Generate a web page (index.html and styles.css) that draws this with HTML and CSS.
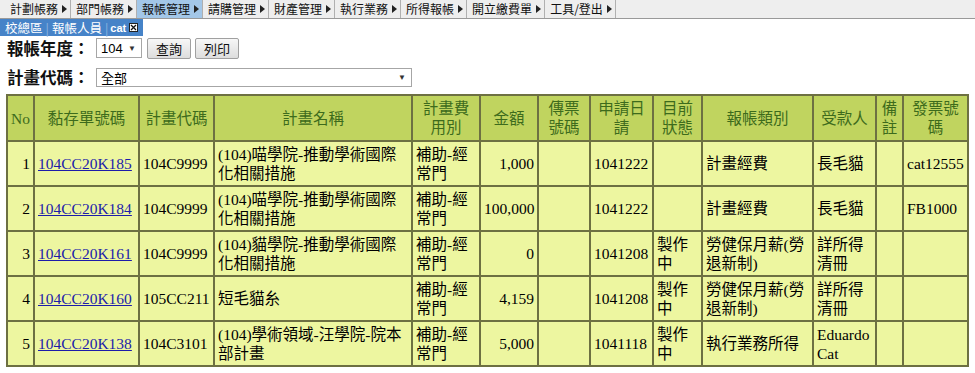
FILE: index.html
```html
<!DOCTYPE html>
<html lang="zh-Hant">
<head>
    <meta charset="UTF-8">
    <meta name="viewport" content="width=device-width, initial-scale=1.0">
    <title>報帳管理</title>
    <link rel="stylesheet" href="styles.css">
</head>
<body>
    <!-- 主選單 -->
    <div class="menubar">
        <ul>
            <li>計劃帳務</li>
            <li>部門帳務</li>
            <li class="active">報帳管理</li>
            <li>請購管理</li>
            <li>財產管理</li>
            <li>執行業務</li>
            <li>所得報帳</li>
            <li>開立繳費單</li>
            <li>工具/登出</li>
        </ul>
    </div>

    <!-- 使用者資訊 -->
    <div class="userbar">
        校總區<span class="sep">|</span>報帳人員<span class="sep">|</span><b>cat</b>
        <span class="close"><svg width="9" height="9" viewBox="0 0 9 9"><rect x="0.5" y="0.5" width="8" height="8" fill="#fff" stroke="#222"/><path d="M2 2L7 7M7 2L2 7" stroke="#111" stroke-width="1.3"/></svg></span>
    </div>

    <!-- 查詢條件 -->
    <form class="query">
        <div class="query_row">
            <label>報帳年度：</label>
            <div class="select select_year"><span>104</span><span class="arrow">▼</span></div>
            <button type="button">查詢</button>
            <button type="button">列印</button>
        </div>
        <div class="query_row">
            <label>計畫代碼：</label>
            <div class="select select_plan"><span>全部</span><span class="arrow">▼</span></div>
        </div>
    </form>

    <!-- 報帳清單 -->
    <table class="report">
        <colgroup>
            <col class="w_no"><col class="w_doc"><col class="w_code"><col class="w_name">
            <col class="w_type"><col class="w_amt"><col class="w_vou"><col class="w_date">
            <col class="w_stat"><col class="w_cat"><col class="w_payee"><col class="w_memo"><col class="w_inv">
        </colgroup>
        <tr>
            <th class="nowrap">No</th><th>黏存單號碼</th><th>計畫代碼</th><th>計畫名稱</th><th>計畫費用別</th><th>金額</th>
            <th>傳票號碼</th><th>申請日請</th><th>目前狀態</th><th>報帳類別</th><th>受款人</th><th>備註</th><th>發票號碼</th>
        </tr>
        <tr>
            <td class="num">1</td><td><a href="#">104CC20K185</a></td><td>104C9999</td>
            <td>(104)喵學院-推動學術國際化相關措施</td><td>補助-經常門</td><td class="num">1,000</td>
            <td></td><td>1041222</td><td></td><td>計畫經費</td><td>長毛貓</td><td></td><td>cat12555</td>
        </tr>
        <tr>
            <td class="num">2</td><td><a href="#">104CC20K184</a></td><td>104C9999</td>
            <td>(104)喵學院-推動學術國際化相關措施</td><td>補助-經常門</td><td class="num">100,000</td>
            <td></td><td>1041222</td><td></td><td>計畫經費</td><td>長毛貓</td><td></td><td>FB1000</td>
        </tr>
        <tr>
            <td class="num">3</td><td><a href="#">104CC20K161</a></td><td>104C9999</td>
            <td>(104)貓學院-推動學術國際化相關措施</td><td>補助-經常門</td><td class="num">0</td>
            <td></td><td>1041208</td><td>製作中</td><td>勞健保月薪(勞退新制)</td><td>詳所得清冊</td><td></td><td></td>
        </tr>
        <tr>
            <td class="num">4</td><td><a href="#">104CC20K160</a></td><td>105CC211</td>
            <td>短毛貓糸</td><td>補助-經常門</td><td class="num">4,159</td>
            <td></td><td>1041208</td><td>製作中</td><td>勞健保月薪(勞退新制)</td><td>詳所得清冊</td><td></td><td></td>
        </tr>
        <tr>
            <td class="num">5</td><td><a href="#">104CC20K138</a></td><td>104C3101</td>
            <td>(104)學術領域-汪學院-院本部計畫</td><td>補助-經常門</td><td class="num">5,000</td>
            <td></td><td>1041118</td><td>製作中</td><td>執行業務所得</td><td>Eduardo Cat</td><td></td><td></td>
        </tr>
    </table>
</body>
</html>
```

FILE: styles.css
```css
*{
    margin: 0;
    padding: 0;
    box-sizing: border-box;
}
body{
    font-family: "Liberation Serif", "Noto Sans CJK TC", serif;
    color: #000;
    background: #fff;
}
li{
    list-style: none;
}

/* 主選單 */
.menubar{
    height: 19px;
    background: #eeeeee;
    border-bottom: 1px solid #999;
}
.menubar ul{
    display: flex;
    height: 18px;
    padding-left: 4px;
}
.menubar li{
    display: flex;
    align-items: center;
    gap: 4px;
    padding: 0 3px 0 5px;
    font-family: "Noto Sans CJK TC", sans-serif;
    font-size: 12px;
    line-height: 18px;
    color: #111;
    border-right: 1px solid #b0b0b0;
}
.menubar li:first-child{
    padding-left: 6px;
}
.menubar li::after{
    content: "";
    border-left: 5px solid #222;
    border-top: 4px solid transparent;
    border-bottom: 4px solid transparent;
}
.menubar li.active{
    background: #a3c7e8;
}

/* 使用者資訊 */
.userbar{
    display: flex;
    align-items: center;
    width: 143px;
    height: 17px;
    padding-left: 5px;
    background: #4683c8;
    color: #fff;
    font-family: "Noto Sans CJK TC", sans-serif;
    font-size: 12.5px;
}
.userbar .sep{
    color: #8fb5e0;
    margin: 0 3px;
}
.userbar b{
    font-family: "Liberation Sans", sans-serif;
    font-size: 11px;
    margin-left: -1px;
}
.userbar .close{
    display: flex;
    margin-left: 3px;
}

/* 查詢條件 */
.query{
    display: flex;
    flex-direction: column;
    gap: 7px;
    padding: 1px 0 0 7px;
}
.query_row{
    display: flex;
    align-items: center;
    height: 22px;
}
.query_row label{
    width: 89px;
    font-family: "Noto Sans CJK TC", sans-serif;
    font-size: 16.5px;
    font-weight: bold;
    line-height: 22px;
    color: #111;
}
.select{
    display: flex;
    align-items: center;
    justify-content: space-between;
    height: 20px;
    padding: 0 5px 0 4px;
    background: #fff;
    border: 1px solid #a6a6a6;
    font-family: "Liberation Sans", "Noto Sans CJK TC", sans-serif;
    font-size: 13px;
}
.select .arrow{
    font-size: 8px;
    color: #333;
}
.select_year{
    width: 46px;
}
.select_plan{
    width: 316px;
    height: 19px;
}
.query button{
    height: 21px;
    margin-left: 5px;
    padding: 0 8px;
    background: linear-gradient(#f7f7f7, #dddddd);
    border: 1px solid #a0a0a0;
    border-radius: 2px;
    font-family: "Noto Sans CJK TC", sans-serif;
    font-size: 13px;
    color: #111;
}
.query button + button{
    margin-left: 4px;
}

/* 報帳清單 */
.report{
    width: 961px;
    margin: 6px 0 0 6px;
    table-layout: fixed;
    border-collapse: collapse;
    font-size: 15.5px;
    line-height: 19px;
}
.report th, .report td{
    border: 2px solid #6d7042;
    vertical-align: middle;
    text-align: left;
}
.report th{
    height: 45px;
    padding: 3px;
    background: #c0d45f;
    color: #3d6b1c;
    font-weight: normal;
    text-align: center;
}
.report th.nowrap{
    padding: 3px 0;
    white-space: nowrap;
}
.report td{
    height: 45px;
    padding: 2px 2px 2px 3px;
    background: #edf6a0;
}
.report td.num{
    text-align: right;
    padding-right: 3px;
}
.report a{
    color: #1c1caa;
}
.w_no{ width: 27px; }
.w_doc{ width: 105px; }
.w_code{ width: 75px; }
.w_name{ width: 198px; }
.w_type{ width: 68px; }
.w_amt{ width: 58px; }
.w_vou{ width: 52px; }
.w_date{ width: 63px; }
.w_stat{ width: 49px; }
.w_cat{ width: 111px; }
.w_payee{ width: 63px; }
.w_memo{ width: 27px; }
.w_inv{ width: 65px; }
```
